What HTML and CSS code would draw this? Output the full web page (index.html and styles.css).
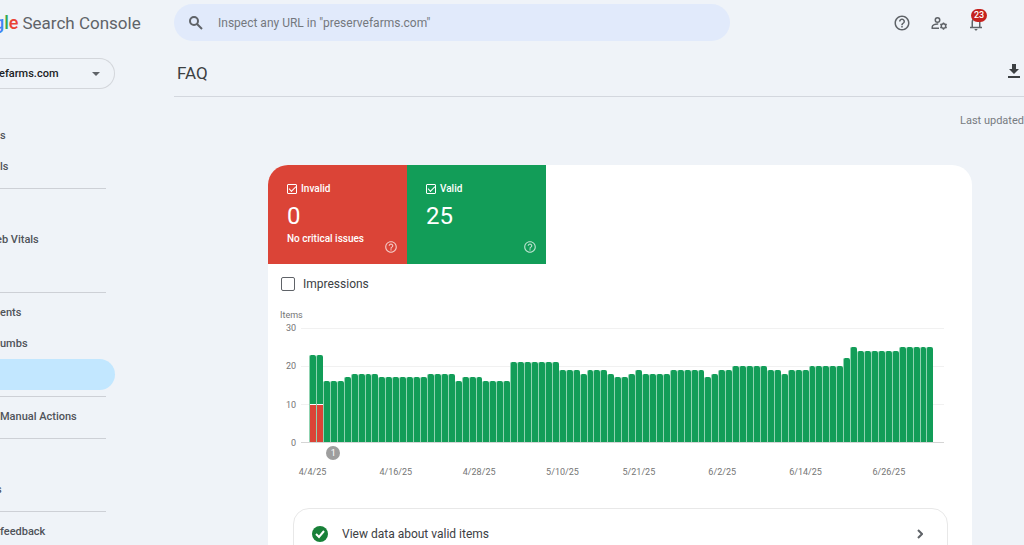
FILE: index.html
```html
<!DOCTYPE html>
<html lang="en">

<head>
    <meta charset="UTF-8">
    <title>FAQ - Search Console</title>
    <link rel="stylesheet" href="styles.css">
    <script>
    window.onload = function() {
        var oBars = document.getElementById('bars');
        var oDates = document.getElementById('dates');
        var max = 30;
        // [items, days in a row]
        var runs = [
            [23, 2], [16, 3], [17, 1], [18, 4], [17, 7], [18, 4], [16, 1], [17, 3], [16, 4],
            [21, 7], [19, 3], [18, 1], [19, 3], [18, 1], [17, 2], [18, 1], [19, 1], [18, 4],
            [19, 5], [17, 1], [18, 1], [19, 2], [20, 5], [19, 2], [18, 1], [19, 3], [20, 5],
            [22, 1], [25, 1], [24, 6], [25, 5]
        ];
        var invalid = [10, 10];
        var dates = [
            [0, '4/4/25'], [12, '4/16/25'], [24, '4/28/25'], [36, '5/10/25'],
            [47, '5/21/25'], [59, '6/2/25'], [71, '6/14/25'], [83, '6/26/25']
        ];
        var day = 0;
        for (var i = 0; i < runs.length; i++) {
            for (var j = 0; j < runs[i][1]; j++) {
                var bar = document.createElement('li');
                bar.style.height = runs[i][0] / max * 100 + '%';
                if (invalid[day]) {
                    var red = document.createElement('b');
                    red.style.height = invalid[day] / runs[i][0] * 100 + '%';
                    bar.appendChild(red);
                }
                oBars.appendChild(bar);
                day++;
            }
        }
        for (var k = 0; k < dates.length; k++) {
            var label = document.createElement('li');
            label.style.gridColumn = dates[k][0] + 1;
            label.innerHTML = dates[k][1];
            oDates.appendChild(label);
        }
    };
    </script>
</head>

<body>
    <div class="app">
        <aside class="side">
            <a class="logo" href="#"><span class="google"><i class="blue">g</i><i class="green">l</i><i class="red">e</i></span>Search Console</a>
            <button class="property" type="button">efarms.com
                <svg width="8" height="4" viewBox="0 0 8 4"><path d="M0 0h8L4 4z" fill="#5f6368"/></svg>
            </button>
            <nav>
                <ul>
                    <li><a href="#">s</a></li>
                    <li><a href="#">ls</a></li>
                </ul>
                <ul>
                    <li></li>
                    <li><a class="cut" href="#">eb Vitals</a></li>
                    <li></li>
                </ul>
                <ul>
                    <li><a href="#">ents</a></li>
                    <li><a href="#">umbs</a></li>
                    <li><a class="current" href="#" aria-label="FAQ"></a></li>
                </ul>
                <ul>
                    <li><a href="#">Manual Actions</a></li>
                </ul>
                <ul>
                    <li></li>
                    <li><a class="cut" href="#">s</a></li>
                </ul>
                <ul>
                    <li><a href="#">feedback</a></li>
                </ul>
            </nav>
        </aside>

        <main class="main">
            <header class="top">
                <label class="search">
                    <svg width="14" height="14" viewBox="0 0 14 14" fill="none" stroke="#5f6368" stroke-width="2"><circle cx="5" cy="5" r="4"/><path d="M8 8l5 5"/></svg>
                    <input type="text" aria-label="Inspect URL" placeholder='Inspect any URL in "preservefarms.com"'>
                </label>
                <div class="tools">
                    <button type="button" aria-label="Help">
                        <svg width="18" height="18" viewBox="0 0 24 24" fill="#5f6368"><path d="M11 18h2v-2h-2v2zm1-16C6.480 2 2 6.480 2 12s4.480 10 10 10 10-4.480 10-10S17.520 2 12 2zm0 18c-4.410 0-8-3.590-8-8s3.590-8 8-8 8 3.590 8 8-3.590 8-8 8zm0-14c-2.210 0-4 1.790-4 4h2c0-1.100.9-2 2-2s2 .9 2 2c0 2-3 1.750-3 5h2c0-2.250 3-2.500 3-5 0-2.210-1.790-4-4-4z"/></svg>
                    </button>
                    <button type="button" aria-label="Users">
                        <svg width="18" height="18" viewBox="0 0 24 24" fill="none" stroke="#5f6368" stroke-width="2"><circle cx="10" cy="8" r="3"/><path d="M12 19H3v-2c0-2.500 4-4 8-3.800"/><circle cx="18" cy="16" r="3"/><path d="M18 11.200v2M18 19v2M13.800 13.600l1.800 1M20.400 17.400l1.800 1M13.800 18.400l1.800-1M20.400 14.600l1.800-1"/></svg>
                    </button>
                    <button class="bell" type="button" aria-label="Notifications">
                        <svg width="18" height="18" viewBox="0 0 24 24" fill="#5f6368"><path d="M12 22c1.100 0 2-.9 2-2h-4c0 1.100.9 2 2 2zm6-5v-6c0-3.070-1.630-5.640-4.500-6.320V4c0-.83-.67-1.500-1.500-1.500s-1.500.67-1.500 1.500v.68C7.640 5.360 6 7.920 6 11v6H4v2h16v-2h-2zm-2 0H8v-6c0-2.480 1.510-4.500 4-4.500s4 2.020 4 4.500v6z"/></svg>
                        <span class="badge">23</span>
                    </button>
                </div>
            </header>

            <div class="title">
                <h1>FAQ</h1>
                <button type="button" aria-label="Export">
                    <svg width="12" height="14" viewBox="0 0 12 14" fill="#3c4043"><path d="M4 0h4v5h3l-5 5-5-5h3zM0 12h12v2H0z"/></svg>
                </button>
            </div>
            <p class="updated">Last updated</p>

            <section class="card">
                <div class="tiles">
                    <div class="tile invalid">
                        <label><input type="checkbox" checked>Invalid</label>
                        <strong>0</strong>
                        <p>No critical issues</p>
                        <svg class="help" width="14" height="14" viewBox="0 0 24 24" fill="#fff"><path d="M11 18h2v-2h-2v2zm1-16C6.480 2 2 6.480 2 12s4.480 10 10 10 10-4.480 10-10S17.520 2 12 2zm0 18c-4.410 0-8-3.590-8-8s3.590-8 8-8 8 3.590 8 8-3.590 8-8 8zm0-14c-2.210 0-4 1.790-4 4h2c0-1.100.9-2 2-2s2 .9 2 2c0 2-3 1.750-3 5h2c0-2.250 3-2.500 3-5 0-2.210-1.790-4-4-4z"/></svg>
                    </div>
                    <div class="tile valid">
                        <label><input type="checkbox" checked>Valid</label>
                        <strong>25</strong>
                        <svg class="help" width="14" height="14" viewBox="0 0 24 24" fill="#fff"><path d="M11 18h2v-2h-2v2zm1-16C6.480 2 2 6.480 2 12s4.480 10 10 10 10-4.480 10-10S17.520 2 12 2zm0 18c-4.410 0-8-3.590-8-8s3.590-8 8-8 8 3.590 8 8-3.590 8-8 8zm0-14c-2.210 0-4 1.790-4 4h2c0-1.100.9-2 2-2s2 .9 2 2c0 2-3 1.750-3 5h2c0-2.250 3-2.500 3-5 0-2.210-1.790-4-4-4z"/></svg>
                    </div>
                </div>
                <label class="impressions"><input type="checkbox">Impressions</label>

                <div class="chart">
                    <h2>Items</h2>
                    <div class="plot">
                        <ul class="scale">
                            <li>30</li>
                            <li>20</li>
                            <li>10</li>
                            <li>0</li>
                        </ul>
                        <div class="grid">
                            <ul class="bars" id="bars"></ul>
                        </div>
                    </div>
                    <div class="days marks"><span>1</span></div>
                    <ul class="days dates" id="dates"></ul>
                </div>

                <a class="view" href="#">
                    <svg width="16" height="16" viewBox="0 0 16 16"><circle cx="8" cy="8" r="8" fill="#188038"/><path d="M4 8l3 3 5-6" fill="none" stroke="#fff" stroke-width="2"/></svg>
                    <span>View data about valid items</span>
                    <svg width="6" height="10" viewBox="0 0 6 10"><path d="M1 1l4 4-4 4" fill="none" stroke="#5f6368" stroke-width="2"/></svg>
                </a>
            </section>
        </main>
    </div>
</body>

</html>
```
FILE: styles.css
```css
* {
    margin: 0;
    padding: 0;
    box-sizing: border-box;
    list-style: none;
    font-style: normal;
}

body {
    background: #eff3f8;
    color: #3c4043;
    font: 12px/16px Roboto, "Liberation Sans", sans-serif;
}

a {
    color: inherit;
    text-decoration: none;
}

button {
    border: 0;
    background: none;
    font: inherit;
    color: inherit;
    cursor: pointer;
}

svg {
    display: block;
    flex: none;
}

.app {
    display: flex;
    height: 100vh;
    overflow: hidden;
}

/* sidebar */
.side {
    flex: none;
    width: 174px;
}

.logo {
    display: flex;
    align-items: center;
    height: 46px;
    margin-left: -6px;
    font-size: 17px;
    color: #5f6368;
}

.google {
    margin-right: 4px;
    font-size: 18px;
    font-weight: 500;
}

.blue {
    color: #4285f4;
}

.green {
    color: #34a853;
}

.red {
    color: #ea4335;
}

.property {
    display: flex;
    align-items: center;
    justify-content: space-between;
    width: 116px;
    height: 31px;
    margin: 12px 0 31px -1px;
    padding-right: 14px;
    border: 1px solid #d3d6db;
    border-left: 0;
    border-radius: 0 16px 16px 0;
    font-size: 11px;
    font-weight: 500;
    color: #202124;
}

nav ul {
    width: 106px;
    padding: 4px 0 6px;
    border-bottom: 1px solid #cdd0d6;
}

nav ul:first-child {
    padding-top: 0;
}

nav li {
    height: 31px;
}

nav a {
    display: block;
    font-size: 11px;
    line-height: 31px;
    font-weight: 500;
    color: #50545a;
    white-space: nowrap;
}

nav .current {
    width: 115px;
    height: 31px;
    border-radius: 0 16px 16px 0;
    background: #c2e7ff;
}

nav .cut {
    margin-left: -4px;
}

/* top */
.main {
    flex: 1;
    min-width: 0;
}

.top {
    display: flex;
    align-items: center;
    justify-content: space-between;
    padding: 4px 39px 0 0;
}

.search {
    display: flex;
    align-items: center;
    gap: 15px;
    width: 556px;
    height: 37px;
    padding: 0 15px;
    border-radius: 19px;
    background: #e1eafb;
}

.search input {
    flex: 1;
    border: 0;
    outline: 0;
    background: none;
    font: inherit;
}

.search input::placeholder {
    color: #74787e;
}

.tools {
    display: flex;
    gap: 19px;
}

.bell {
    position: relative;
}

.badge {
    position: absolute;
    top: -5px;
    left: 4px;
    width: 16px;
    height: 13px;
    border-radius: 7px;
    background: #c5221f;
    color: #fff;
    font-size: 9px;
    line-height: 13px;
    font-weight: 500;
}

.title {
    display: flex;
    align-items: center;
    justify-content: space-between;
    height: 56px;
    padding: 8px 4px 0 3px;
    border-bottom: 1px solid #d3d7de;
}

h1 {
    font-size: 17px;
    line-height: 24px;
    font-weight: 400;
}

.title button {
    margin-bottom: 4px;
}

.updated {
    padding-top: 16px;
    font-size: 11px;
    color: #777b81;
    text-align: right;
}

/* card */
.card {
    margin: 36px 52px 0 94px;
    border-radius: 20px 20px 0 0;
    background: #fff;
    overflow: hidden;
}

.tiles {
    display: flex;
}

.tile {
    position: relative;
    width: 139px;
    height: 99px;
    padding: 16px 19px;
    color: #fff;
    font-size: 10px;
    font-weight: 500;
}

.invalid {
    background: #db4437;
}

.valid {
    background: #129d58;
}

.tile label {
    display: flex;
    align-items: center;
    gap: 4px;
}

.tile strong {
    display: block;
    margin-top: 4px;
    font-size: 24px;
    line-height: 30px;
    font-weight: 400;
}

.tile p {
    line-height: 16px;
}

input[type=checkbox] {
    display: grid;
    place-items: center;
    appearance: none;
    width: 10px;
    height: 10px;
    border: 1px solid #fff;
    border-radius: 1px;
}

input[type=checkbox]:checked::after {
    content: "";
    width: 6px;
    height: 3px;
    margin-bottom: 2px;
    border: solid #fff;
    border-width: 0 0 1px 1px;
    transform: rotate(-45deg);
}

.help {
    position: absolute;
    right: 9px;
    bottom: 10px;
    opacity: 0.7;
}

.impressions {
    display: flex;
    align-items: center;
    gap: 8px;
    padding: 12px 13px 0;
}

.impressions input[type=checkbox] {
    width: 14px;
    height: 14px;
    border: 1px solid #5f6368;
    border-radius: 2px;
}

/* chart */
.chart {
    padding: 16px 28px 0 12px;
    color: #757575;
    font-size: 9px;
}

h2 {
    font-size: 9px;
    line-height: 14px;
    font-weight: 400;
}

.plot {
    display: flex;
    gap: 5px;
    margin-top: 6px;
}

.scale {
    display: flex;
    flex-direction: column;
    justify-content: space-between;
    width: 16px;
    margin: -6px 0;
    line-height: 12px;
    text-align: right;
}

.grid {
    flex: 1;
    height: 115px;
    padding: 0 10px 0 8px;
    border-bottom: 1px solid #d5d5d5;
    background: repeating-linear-gradient(#f1f1f1 0 1px, transparent 1px 38px);
}

.bars {
    display: flex;
    align-items: flex-end;
    height: 114px;
}

.bars li {
    display: flex;
    align-items: flex-end;
    flex: 1;
    border-left: 1px solid #8fd3b1;
    border-radius: 2px 2px 0 0;
    background: #129d58;
}

.bars b {
    flex: 1;
    border-top: 1px solid #fff;
    background: #db4437;
}

.days {
    display: grid;
    grid-template-columns: repeat(90, minmax(0, 1fr));
    padding: 0 10px 0 29px;
}

.days > * {
    display: flex;
    justify-content: center;
    white-space: nowrap;
}

.marks {
    padding-top: 3px;
}

.marks span {
    grid-column: 4;
    justify-self: center;
    width: 14px;
    height: 14px;
    border-radius: 50%;
    background: #9e9e9e;
    color: #fff;
    line-height: 14px;
}

.dates {
    padding-top: 5px;
    line-height: 14px;
}

.view {
    display: flex;
    align-items: center;
    height: 64px;
    margin: 29px 24px 0 25px;
    padding: 0 24px 12px 18px;
    border: 1px solid #e8e8e8;
    border-radius: 16px;
}

.view span {
    flex: 1;
    margin-left: 14px;
}
```
